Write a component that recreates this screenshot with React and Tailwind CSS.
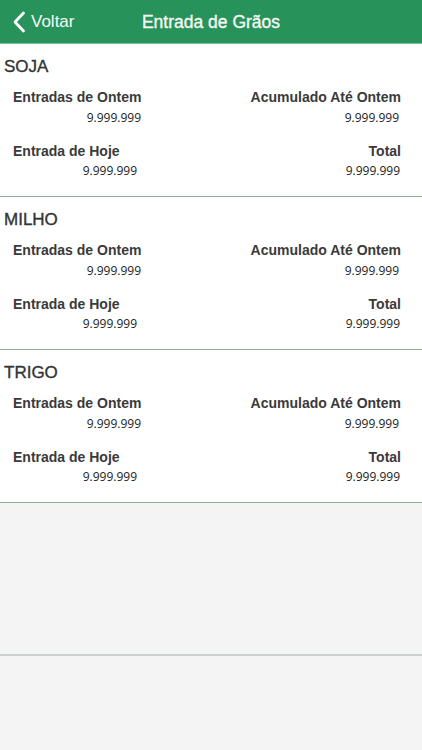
import React from "react";

const sections = ["SOJA", "MILHO", "TRIGO"];

function Section({ name }) {
  return (
    <div className="bg-white h-[153px] border-b border-[#8fae97] flex flex-col">
      <div className="pt-[13px] pl-[4px] text-[17px] leading-[20px] text-[#333333] [-webkit-text-stroke:0.35px_#333333]">{name}</div>
      <div className="flex justify-between pl-[13px] pr-[21px] mt-[11px]">
        <div className="flex flex-col">
          <div className="text-[14px] leading-[18px] font-bold text-[#3a3a3a]">Entradas de Ontem</div>
          <div className="w-[128px] text-right mt-[4px] text-[12px] leading-[16px] text-[#222222] [font-family:'Open_Sans',sans-serif]">9.999.999</div>
          <div className="text-[14px] leading-[18px] font-bold text-[#3a3a3a] mt-[16px]">Entrada de Hoje</div>
          <div className="w-[124px] text-right mt-[3px] text-[12px] leading-[16px] text-[#222222] [font-family:'Open_Sans',sans-serif]">9.999.999</div>
        </div>
        <div className="flex flex-col items-end">
          <div className="text-[14px] leading-[18px] font-bold text-[#3a3a3a]">Acumulado Até Ontem</div>
          <div className="pr-[2px] mt-[4px] text-[12px] leading-[16px] text-[#222222] [font-family:'Open_Sans',sans-serif]">9.999.999</div>
          <div className="text-[14px] leading-[18px] font-bold text-[#3a3a3a] mt-[16px]">Total</div>
          <div className="pr-[1px] mt-[3px] text-[12px] leading-[16px] text-[#222222] [font-family:'Open_Sans',sans-serif]">9.999.999</div>
        </div>
      </div>
    </div>
  );
}

export default function App() {
  return (
    <div className="w-[422px] h-[750px] bg-[#f4f4f4] flex flex-col overflow-hidden [font-family:'Liberation_Sans',Arial,sans-serif]">
      <div className="h-[44px] bg-[#27935a] border-b border-[#7fbf98] flex items-center relative shrink-0">
        <div className="flex items-center pl-[12px] text-white">
          <svg width="14" height="22" viewBox="0 0 14 22" fill="none">
            <path d="M11.5 2 L3 11 L11.5 20" stroke="white" strokeWidth="2.8" strokeLinecap="round" strokeLinejoin="round" />
          </svg>
          <span className="ml-[5px] text-[17px] leading-[20px] text-[#f4faf6]">Voltar</span>
        </div>
        <div className="absolute inset-0 flex items-center justify-center text-[#f4faf6] text-[17.5px] leading-[20px] pointer-events-none [-webkit-text-stroke:0.35px_#f4faf6]">
          Entrada de Grãos
        </div>
      </div>
      {sections.map((s) => (
        <Section key={s} name={s} />
      ))}
      <div className="h-[153px] border-b-2 border-[#c9d3cc] shrink-0"></div>
    </div>
  );
}
